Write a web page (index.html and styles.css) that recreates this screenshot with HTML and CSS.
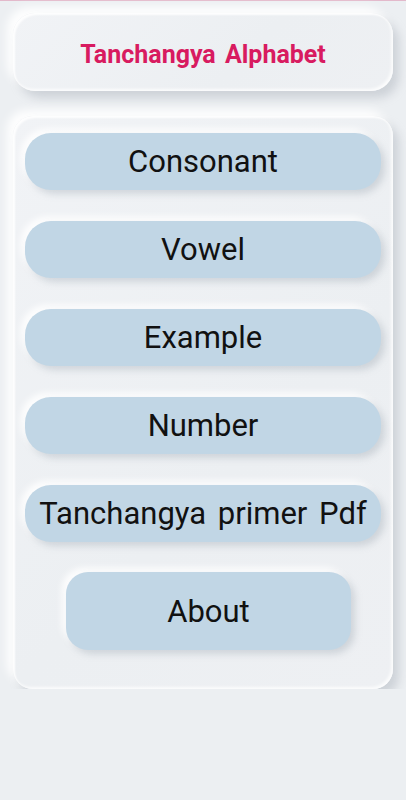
FILE: index.html
```html
<!DOCTYPE html>
<html>
<head>
<meta charset="utf-8">
<link rel="stylesheet" href="styles.css">
</head>
<body>
<div class="topline"></div>
<div class="page">
  <div class="card header">
    <h1 class="title">Tanchangya Alphabet</h1>
  </div>
  <div class="card menu">
    <div class="btn">Consonant</div>
    <div class="btn">Vowel</div>
    <div class="btn">Example</div>
    <div class="btn">Number</div>
    <div class="btn">Tanchangya primer Pdf</div>
    <div class="btn about">About</div>
  </div>
</div>
</body>
</html>
```
FILE: styles.css
```css
html, body {
  margin: 0;
  padding: 0;
  background: #eceff2;
  font-family: Roboto, "Noto Sans", sans-serif;
}
.topline {
  height: 1px;
  background: #e3b9cb;
}
.page {
  display: flex;
  flex-direction: column;
  gap: 25px;
  padding: 12px 13px 0 13px;
}
.card {
  border-radius: 22px;
  background: linear-gradient(135deg, #f1f3f6 0%, #eceff2 60%, #eef0f3 100%);
  box-shadow: 6px 7px 10px rgba(160, 167, 178, 0.4),
              -6px -6px 10px rgba(255, 255, 255, 0.95),
              inset 2px 2px 2px rgba(255, 255, 255, 0.9),
              inset -2px -2px 3px rgba(255, 255, 255, 0.8);
}
.header {
  height: 78px;
  box-sizing: border-box;
  padding-top: 5px;
  display: flex;
  align-items: center;
  justify-content: center;
}
.title {
  margin: 0;
  font-size: 25px;
  font-weight: 700;
  color: #d81b60;
  word-spacing: 3px;
}
.menu {
  display: flex;
  flex-direction: column;
  gap: 31px;
  padding: 17px 12px 39px 12px;
  border-radius: 20px;
}
.btn {
  height: 57px;
  border-radius: 26px;
  background: #c1d6e5;
  display: flex;
  align-items: center;
  justify-content: center;
  font-size: 31px;
  word-spacing: 4px;
  color: #111;
  box-shadow: 4px 4px 7px rgba(150, 160, 172, 0.35),
              -4px -4px 7px rgba(255, 255, 255, 0.95);
}
.about {
  width: 285px;
  height: 78px;
  margin-left: 41px;
  margin-top: -1px;
  border-radius: 22px;
}
```
